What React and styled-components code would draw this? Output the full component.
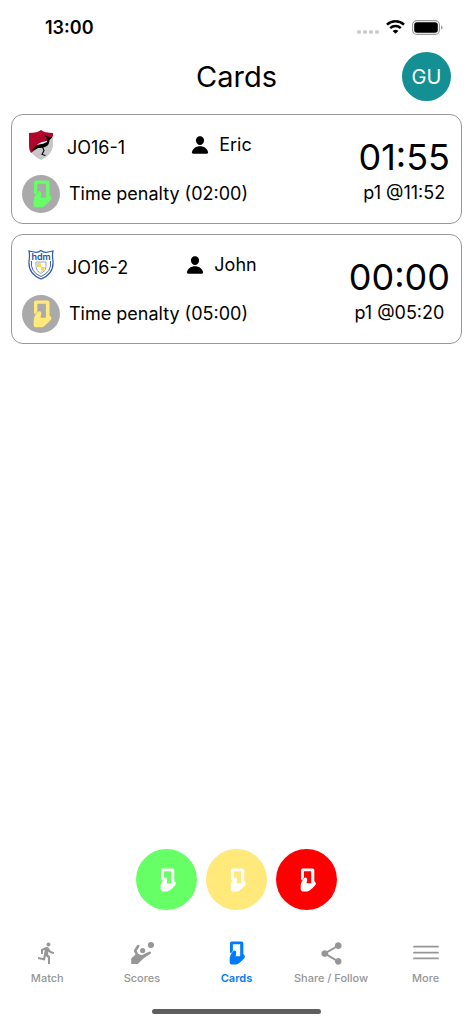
import React from 'react';
import styled, { createGlobalStyle } from 'styled-components';
import { MdDirectionsRun, MdShare } from 'react-icons/md';
import { IoPerson } from 'react-icons/io5';

const GlobalStyle = createGlobalStyle`
    * {
        box-sizing: border-box;
    }

    body {
        margin: 0;
        background: #fff;
        color: #000;
        font-family: Inter, 'Liberation Sans', sans-serif;
    }

    button {
        font-family: inherit;
        border: none;
        padding: 0;
        cursor: pointer;
    }
`;

const Screen = styled.div`
    display: flex;
    flex-direction: column;
    min-height: 100vh;
`;

const StatusBar = styled.div`
    display: flex;
    justify-content: space-between;
    align-items: center;
    height: 52px;
    padding: 2px 30px 0 45px;
`;

const Clock = styled.span`
    font-size: 18px;
    font-weight: 600;
`;

const StatusIcons = styled.div`
    display: flex;
    align-items: center;
    gap: 7px;
`;

const Header = styled.header`
    display: grid;
    grid-template-columns: 1fr auto 1fr;
    align-items: center;
    height: 49px;
    padding: 0 22px;
`;

const Title = styled.h1`
    grid-column: 2;
    margin: 0;
    font-size: 29px;
    line-height: 36px;
    font-weight: 400;
`;

const Avatar = styled.button`
    justify-self: end;
    width: 49px;
    height: 49px;
    border-radius: 50%;
    background: #148f93;
    color: #fff;
    font-size: 20px;
`;

const List = styled.main`
    flex: 1;
    display: flex;
    flex-direction: column;
    gap: 10px;
    padding: 13px 11px;
`;

const Card = styled.article`
    display: flex;
    justify-content: space-between;
    height: 110px;
    padding: 10px 11px 10px 10px;
    border: 1px solid #979797;
    border-radius: 12px;
    font-size: 18px;
    line-height: 24px;
`;

const Info = styled.div`
    flex: 1;
    display: flex;
    flex-direction: column;
    justify-content: space-between;
`;

const TeamRow = styled.div`
    display: grid;
    grid-template-columns: 37px 104px 84px;
    column-gap: 8px;
    align-items: center;
    height: 40px;
`;

const Crest = styled.svg`
    width: 26px;
    height: 32px;
    justify-self: center;
`;

const Team = styled.span`
    padding-top: 6px;
`;

const Player = styled.span`
    display: flex;
    align-items: center;
    justify-content: center;
    gap: 9px;
`;

const PenaltyRow = styled.div`
    display: flex;
    align-items: center;
    gap: 9px;
`;

const Badge = styled.span`
    display: flex;
    align-items: center;
    justify-content: center;
    width: 38px;
    height: 38px;
    border-radius: 50%;
    background: #aaa;
    color: ${props => props.$color};
`;

const Timer = styled.div`
    text-align: center;
    padding-top: 8px;
`;

const Remaining = styled.div`
    font-size: 36px;
    line-height: 48px;
`;

const Actions = styled.div`
    display: flex;
    justify-content: center;
    gap: 9px;
    margin-bottom: 23px;
`;

const ActionButton = styled.button`
    display: flex;
    align-items: center;
    justify-content: center;
    width: 61px;
    height: 61px;
    border-radius: 50%;
    background: ${props => props.$color};
    color: #fff;
`;

const TabBar = styled.nav`
    display: flex;
    height: 76px;
`;

const Tab = styled.a`
    flex: 1;
    display: flex;
    flex-direction: column;
    align-items: center;
    gap: 6px;
    padding-top: 8px;
    color: ${props => (props.$active ? '#007aff' : '#969696')};
    font-size: 11px;
    line-height: 14px;
    font-weight: ${props => (props.$active ? 600 : 500)};
    text-decoration: none;
`;

const TabIcon = styled.span`
    display: flex;
    align-items: center;
    justify-content: center;
    height: 24px;
`;

const HomeIndicator = styled.div`
    width: 169px;
    height: 5px;
    margin: 0 auto 10px;
    border-radius: 3px;
    background: #5f5f5f;
`;

const CardIcon = ({ size }) => (
    <svg width={size} height={size} viewBox="-1 0 24 24" fill="currentColor" aria-hidden="true">
        <path d="M6.7 .4H16.6Q18.3 .4 18.3 2.1V15.4H15.2V3.3H7.9V9.8L6.1 12.4Q5 12 5 10.8V2.1Q5 .4 6.7 .4Z" />
        <path d="M4.7 21.6V18Q4.7 15.8 5.8 13.6L7.9 10.6Q9 9.2 10.3 9.7Q11.5 10.4 11.2 12L10.6 15.3H15.2L17 12.8L18.3 13.2L19.8 14.7V16.4Q17.4 19.4 13.6 22.6Q12.6 23.4 11.4 23.4H6.4Q4.7 23.4 4.7 21.6Z" />
    </svg>
);

const ScoresIcon = () => (
    <svg width="24" height="24" viewBox="0 0 24 24" fill="currentColor" aria-hidden="true">
        <circle cx="21" cy="4" r="3.1" />
        <circle cx="12.7" cy="9.6" r="2.6" />
        <path d="M8.2 5L5.2 9.8L7.6 14.4" fill="none" stroke="currentColor" strokeWidth="2.6" strokeLinecap="round" strokeLinejoin="round" />
        <path d="M1.2 17.4L6.6 12.6L9.6 13.4L12 13.9L19.6 10.5Q20.8 10.3 21.1 11.5Q21.1 12.4 20.2 13L14 17L7.6 23H1.2Z" />
    </svg>
);

const MenuIcon = () => (
    <svg width="26" height="24" viewBox="0 0 26 24" stroke="currentColor" strokeWidth="1.8" strokeLinecap="round" aria-hidden="true">
        <path d="M1 5.7H25M1 11.7H25M1 17.4H25" />
    </svg>
);

const WifiIcon = () => (
    <svg width="19" height="14" viewBox="0 0 19 14" fill="none" stroke="#000" strokeWidth="2.5" aria-hidden="true">
        <path d="M1 4.6C5.8 .2 13.2 .2 18 4.6" />
        <path d="M4.2 8.2C7.2 5.4 11.8 5.4 14.8 8.2" />
        <path d="M9.5 13.8L6.6 11Q9.5 8.7 12.4 11Z" fill="#000" stroke="none" />
    </svg>
);

const BatteryIcon = () => (
    <svg width="31" height="15" viewBox="0 0 31 15" aria-hidden="true">
        <rect x=".6" y=".6" width="26.8" height="13.8" rx="4.2" fill="none" stroke="#9a9a9a" strokeWidth="1.1" />
        <rect x="2.2" y="2.2" width="23.6" height="10.6" rx="2.8" />
        <path d="M29 5.2Q30.6 6 30.6 7.5T29 9.8Z" fill="#9a9a9a" />
    </svg>
);

const SignalIcon = () => (
    <svg width="22" height="15" viewBox="0 0 22 15" fill="#cacaca" aria-hidden="true">
        <circle cx="2" cy="12" r="2" />
        <circle cx="8" cy="12" r="2" />
        <circle cx="14" cy="12" r="2" />
        <circle cx="20" cy="12" r="2" />
    </svg>
);

const BirdCrest = () => (
    <Crest viewBox="0 0 26 32" aria-hidden="true">
        <path d="M13 1Q16 4 25 4V17Q24 26 13 31Q2 26 1 17V4Q10 4 13 1Z" fill="#c8c8c8" />
        <path d="M13 1Q16 4 25 4V7L3 24Q1 21 1 17V4Q10 4 13 1Z" fill="#b0062c" />
        <path d="M9 15.5Q13 12.5 19 12L20.5 14L12 16Z" fill="#fff" />
        <path d="M4 20.5Q7 16.5 11 15.5Q15 15 19 13L18.6 9L21 7.5L23 9.5L21.5 11Q21.5 16 17.5 17.8Q14 19.5 10 19L5 21.8Z" />
        <path d="M14.5 18L16 21.5L14 25.5L17.5 26.5M16.5 6.5L20 8.5M22 9.5L24 8" stroke="#000" strokeWidth="1.1" fill="none" />
    </Crest>
);

const HdmCrest = () => (
    <Crest viewBox="0 0 26 32" aria-hidden="true">
        <path d="M13 1.5Q16 4 20 3L25 2Q24 6 25 12Q26 25 13 30Q0 25 1 12Q2 6 1 2L6 3Q10 4 13 1.5Z" fill="#fff" stroke="#2c57a5" strokeWidth="1.2" />
        <path d="M3.5 12Q2 23 13 27.5Q24 23 22.5 12" fill="none" stroke="#2c57a5" strokeWidth=".9" />
        <path d="M8 13H18V18Q18 22 13 24.5Q8 22 8 18Z" fill="#fff" stroke="#8ba0bd" strokeWidth=".9" />
        <path d="M9 14H13V18H17V19Q16 22 13 23V18H9Z" fill="#f7dc46" />
        <text x="13" y="11" textAnchor="middle" fontSize="9" fontWeight="600" fill="#2350a0">hdm</text>
    </Crest>
);

const penalties = [
    { crest: <BirdCrest />, team: 'JO16-1', player: 'Eric', color: '#66ff66', duration: '02:00', remaining: '01:55', at: 'p1 @11:52' },
    { crest: <HdmCrest />, team: 'JO16-2', player: 'John', color: '#ffe97a', duration: '05:00', remaining: '00:00', at: 'p1 @05:20' },
];

const cardTypes = [
    { name: 'Green card', color: '#66ff66' },
    { name: 'Yellow card', color: '#ffe97a' },
    { name: 'Red card', color: '#ff0000' },
];

const tabs = [
    { label: 'Match', icon: <MdDirectionsRun size={24} /> },
    { label: 'Scores', icon: <ScoresIcon /> },
    { label: 'Cards', icon: <CardIcon size={24} />, active: true },
    { label: 'Share / Follow', icon: <MdShare size={27} /> },
    { label: 'More', icon: <MenuIcon /> },
];

const PenaltyCard = ({ crest, team, player, color, duration, remaining, at }) => {
    return (
        <Card>
            <Info>
                <TeamRow>
                    {crest}
                    <Team>{team}</Team>
                    <Player>
                        <IoPerson size={20} />
                        {player}
                    </Player>
                </TeamRow>
                <PenaltyRow>
                    <Badge $color={color}>
                        <CardIcon size={28} />
                    </Badge>
                    Time penalty ({duration})
                </PenaltyRow>
            </Info>
            <Timer>
                <Remaining>{remaining}</Remaining>
                <div>{at}</div>
            </Timer>
        </Card>
    );
};

const App = () => {
    return (
        <Screen>
            <GlobalStyle />
            <StatusBar>
                <Clock>13:00</Clock>
                <StatusIcons>
                    <SignalIcon />
                    <WifiIcon />
                    <BatteryIcon />
                </StatusIcons>
            </StatusBar>
            <Header>
                <Title>Cards</Title>
                <Avatar type="button">GU</Avatar>
            </Header>
            <List>
                {penalties.map(penalty => (
                    <PenaltyCard key={penalty.team} {...penalty} />
                ))}
            </List>
            <Actions>
                {cardTypes.map(({ name, color }) => (
                    <ActionButton key={name} type="button" aria-label={name} $color={color}>
                        <CardIcon size={24} />
                    </ActionButton>
                ))}
            </Actions>
            <TabBar>
                {tabs.map(({ label, icon, active }) => (
                    <Tab key={label} href="#" $active={active}>
                        <TabIcon>{icon}</TabIcon>
                        {label}
                    </Tab>
                ))}
            </TabBar>
            <HomeIndicator />
        </Screen>
    );
};

export default App;
